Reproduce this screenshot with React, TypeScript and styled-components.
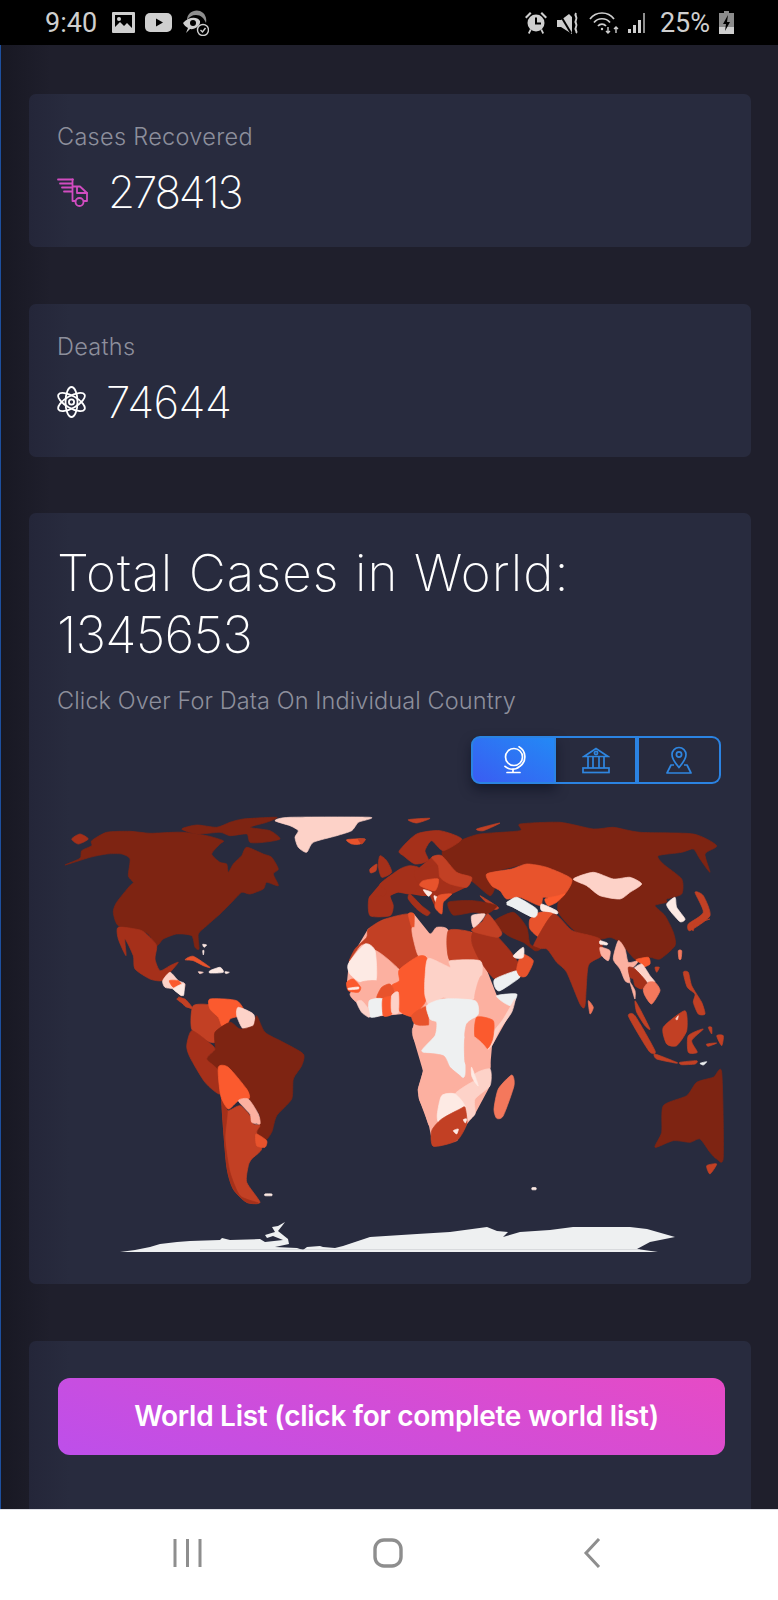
import styled, { createGlobalStyle } from 'styled-components'

const GlobalStyle = createGlobalStyle`
  html, body {
    margin: 0;
    padding: 0;
    background: #1f1f2c;
    font-family: Inter, 'Open Sans', sans-serif;
  }
`

const Screen = styled.div`
  width: 778px;
  height: 1600px;
  display: flex;
  flex-direction: column;
  overflow: hidden;
`

const StatusBar = styled.div`
  height: 45px;
  flex: none;
  background: #000;
  color: #cfcfcf;
  display: flex;
  align-items: center;
  justify-content: space-between;
  padding: 0 44px 0 45px;
  font-family: Roboto, sans-serif;
  font-size: 27px;
`

const StatusGroup = styled.div<{ $gap: number }>`
  display: flex;
  align-items: center;
  gap: ${p => p.$gap}px;
`

const StatusText = styled.span<{ $side: 'left' | 'right' }>`
  margin: ${p => (p.$side === 'left' ? '0 5px 0 0' : '0 0 0 3px')};
`

const Main = styled.div`
  flex: 1;
  min-height: 0;
  overflow: hidden;
  border-left: 1px solid #1d4f9e;
  padding: 49px 27px 0 28px;
  display: flex;
  flex-direction: column;
  gap: 56.5px;
  background: linear-gradient(90deg, #181823 0, #1f1f2c 50px, #1f1f2c 100%);
`

const Card = styled.section`
  flex: none;
  border-radius: 7px;
  background: linear-gradient(90deg, #242639 0, #282b3e 40px, #282b3e 100%);
`

const StatBody = styled.div`
  height: 153px;
  box-sizing: border-box;
  padding: 28px 28px 0;
`

const StatLabel = styled.div`
  font-size: 23.5px;
  line-height: 30px;
  font-weight: 300;
  color: #8d8f9c;
  letter-spacing: 0.3px;
`

const StatRow = styled.div`
  display: flex;
  align-items: center;
  gap: 20px;
  margin-top: 15px;
  height: 50px;
`

const StatValue = styled.div<{ $tracking: number }>`
  font-size: 44px;
  font-weight: 200;
  color: #fff;
  letter-spacing: ${p => p.$tracking}px;
`

const MapHead = styled.div`
  padding: 29px 28px 0;
`

const Title = styled.h1`
  margin: 0;
  font-size: 51px;
  line-height: 62px;
  font-weight: 200;
  color: #fff;
  letter-spacing: 1.1px;
`

const TitleNumber = styled.span`
  letter-spacing: -0.7px;
`

const Subtitle = styled.p`
  margin: 18px 0 0;
  font-size: 23.5px;
  line-height: 33px;
  font-weight: 300;
  color: #8d8f9c;
  letter-spacing: 0.1px;
`

const Toggle = styled.div`
  display: flex;
  justify-content: flex-end;
  margin: 19px 30px 0 0;
`

const ToggleButton = styled.div<{ $active?: boolean; $w: number; $pos: 'l' | 'm' | 'r' }>`
  width: ${p => p.$w}px;
  height: 48px;
  box-sizing: border-box;
  display: flex;
  align-items: center;
  justify-content: center;
  color: ${p => (p.$active ? '#fff' : '#2f86e0')};
  border: 2px solid #2b83e2;
  border-left-width: ${p => (p.$pos === 'l' ? 2 : 0)}px;
  border-right-width: ${p => (p.$pos === 'm' ? 4 : 2)}px;
  border-radius: ${p => (p.$pos === 'l' ? '9px 0 0 9px' : p.$pos === 'r' ? '0 9px 9px 0' : '0')};
  background: ${p => (p.$active ? 'linear-gradient(210deg, #2389f5 0%, #3a5cf2 100%)' : 'transparent')};
  box-shadow: ${p => (p.$active ? '0 6px 12px rgba(10, 12, 30, 0.55)' : 'none')};
`

const WorldSvg = styled.svg`
  display: block;
  margin-top: 6px;
  width: 722px;
  height: 494px;
`

const ListBody = styled.div`
  padding: 37px 26px 60px 29px;
`

const ListButton = styled.button`
  display: block;
  width: 100%;
  height: 77px;
  border: 0;
  border-radius: 12px;
  padding: 0 0 0 10px;
  color: #fff;
  font-family: Inter, sans-serif;
  font-size: 28px;
  font-weight: 600;
  letter-spacing: -0.27px;
  background: linear-gradient(20deg, #bd4fea 0%, #e64bc5 100%);
`

const NavBar = styled.div`
  height: 91px;
  flex: none;
  background: #fff;
  border-top: 1px solid #dfe0e6;
  box-sizing: border-box;
  display: grid;
  grid-template-columns: 173px 29px 171px 30px 180px 20px;
  align-items: center;
  padding-bottom: 4px;
  color: #8e8e8e;
  & > svg { display: block; }
`

const NavSpacer = styled.span``

const DARK = '#7e2412'
const DEEP = '#a5301a'
const MID = '#c24024'
const RED = '#e8532c'
const ORANGE = '#fb5a2e'
const CORAL = '#f4785c'
const SALMON = '#fcb0a0'
const PALE = '#fdd2c8'
const CREAM = '#fdeae4'
const GREY = '#eef0f1'

type Shape = [string, string]

// traced from 3x crops, a group per crop, see origin passed to toShapes
const americas: Shape[] = [
  [DARK, '45,198 90,178 95,155 125,140 125,125 170,100 240,97 300,103 370,100 400,100 470,110 520,125 510,135 485,165 510,190 530,195 535,220 550,195 575,170 590,145 640,165 665,175 685,210 670,225 685,260 650,250 640,270 600,285 575,280 545,310 510,345 470,380 445,405 447,450 435,445 425,410 380,405 340,420 320,440 295,405 270,395 205,380 190,340 200,310 240,260 250,250 235,230 240,180 215,165 170,165 120,175'],
  [DARK, '395,90 440,78 500,85 540,70 580,60 680,55 650,70 600,85 660,95 690,120 640,130 600,130 590,105 540,110 510,100 440,105'],
  [DEEP, '65,120 90,105 115,120 85,135'],
  [PALE, '675,65 720,55 960,55 925,70 905,95 860,110 790,130 770,160 745,145 735,115 745,95 720,80'],
  [RED, '890,122 945,120 930,135 905,135'],
  [DEEP, '205,385 270,393 295,410 320,440 315,480 330,515 360,500 385,490 360,520 335,545 300,540 255,510 250,470 225,420 228,470 205,420'],
  [PALE, '338,545 360,520 385,545 405,555 395,590 370,570 345,565'],
  [ORANGE, '358,545 385,545 395,560 370,565'],
  [CREAM, '370,570 400,555 400,590'],
  [MID, '385,595 400,600 420,625 405,622'],
  [RED, '405,482 430,472 480,505 460,500 430,485'],
  [CREAM, '480,515 510,505 520,520 480,522'],
  [PALE, '445,518 460,520 450,524'],
  [CREAM, '525,518 538,520 528,524'],
  [CREAM, '458,436 470,438 462,445'],
  [CREAM, '458,455 462,455 460,468'],
]

const europe: Shape[] = [
  [DEEP, '118,125 170,75 240,65 305,90 250,125 215,95 195,125 205,155 165,165 130,140'],
  [MID, '-5,90 15,92 5,105'],
  [MID, '145,32 210,28 170,42'],
  [MID, '350,60 420,42 370,65'],
  [DEEP, '60,140 80,155 95,190 65,205 55,170'],
  [MID, '30,180 50,165 48,185 32,192'],
  [DEEP, '60,225 120,180 150,170 180,180 170,240 150,255 115,250 90,260 100,290 90,320 30,320 28,265 70,262 80,245'],
  [DEEP, '150,255 185,290 210,310 200,320 170,300 145,270'],
  [DEEP, '165,185 230,170 240,205 175,220'],
  [DEEP, '225,225 275,225 270,250 235,255 225,240'],
  [RED, '190,215 235,210 225,245 180,230'],
  [MID, '215,145 245,140 290,190 335,205 320,235 270,225 240,205 235,170'],
  [CREAM, '190,242 215,250 205,262'],
  [CREAM, '222,260 240,270 228,280'],
  [RED, '235,260 275,255 250,280 245,315 225,295'],
]

const asia: Shape[] = [
  [DARK, '190,150 240,125 300,105 420,95 420,75 540,70 640,90 700,85 780,100 940,105 1010,140 975,165 990,220 960,180 940,150 905,160 835,170 850,195 905,240 905,285 860,300 860,310 825,320 855,350 880,400 885,440 840,480 810,475 770,485 720,430 690,415 660,420 590,400 535,340 540,290 575,240 500,205 440,195 395,205 325,225 345,260 330,290 280,250 230,220 190,180'],
  [RED, '320,225 395,210 440,195 500,205 575,240 555,285 525,300 490,295 480,320 420,295 380,300 360,275 335,260'],
  [ORANGE, '495,300 535,290 555,285 530,310 505,320'],
  [GREY, '380,315 410,295 470,330 465,358 400,325'],
  [CREAM, '485,315 530,335 530,345 485,335'],
  [PALE, '580,240 640,220 700,240 750,235 785,255 750,280 720,300 660,290 620,260'],
  [RED, '450,360 480,340 520,345 515,385 480,415 450,390'],
  [DEEP, '470,420 520,345 570,390 590,400 660,420 665,470 625,500 615,620 600,615 560,520 530,490 500,450 460,450'],
  [CREAM, '860,315 885,295 890,325 915,360 900,368 870,335'],
  [MID, '945,280 970,290 990,350 930,395 925,375 970,340'],
  [CORAL, '625,605 640,625 630,645'],
  [MID, '300,290 355,325 340,330'],
]

const africaNorth: Shape[] = [
  [DARK, '325,10 400,5 470,20 440,45 400,40 340,48'],
  [DARK, '460,70 520,40 560,85 570,135 600,150 585,155 550,130 505,110'],
  [GREY, '500,10 535,0 590,40 580,55 520,25'],
  [MID, '28,185 45,150 80,115 85,90 130,62 205,45 218,80 220,115 235,170 178,210 110,155 80,135 60,140'],
  [RED, '205,45 222,45 222,85 218,95'],
  [SALMON, '218,85 270,105 290,85 325,95 330,205 265,175 235,170 220,120'],
  [MID, '325,95 395,100 395,130 420,185 330,185'],
  [DEEP, '400,95 430,70 470,110 510,155 545,210 530,235 465,240 420,185 395,130'],
  [MID, '395,95 425,70 445,45 485,100 470,115'],
  [PALE, '395,50 435,45 420,70 400,85'],
  [GREY, '465,240 530,215 540,235 480,275 465,265'],
  [RED, '545,165 580,185 560,230 540,232 530,210'],
  [CREAM, '520,170 550,145 550,175 530,178'],
  [SALMON, '105,155 178,212 178,245 150,258 125,265 108,245'],
  [CREAM, '25,195 75,135 105,155 108,245 62,250 30,225'],
  [ORANGE, '178,212 235,172 262,182 258,300 240,330 225,355 190,345 175,330 175,290 155,260 178,245'],
  [SALMON, '30,285 62,250 108,245 125,265 112,298 90,302 70,305 50,310'],
  [ORANGE, '20,250 40,240 62,265 55,280 25,275'],
  [CREAM, '25,268 55,264 55,270 28,272'],
  [RED, '110,295 125,265 150,255 165,285 125,300'],
  [GREY, '88,305 128,300 128,345 100,355 88,350'],
  [PALE, '50,310 65,305 85,330 88,355 65,340'],
  [ORANGE, '128,300 155,295 155,345 130,350'],
  [PALE, '155,290 175,280 175,340 155,340'],
  [RED, '240,330 260,325 265,380 225,375 215,350'],
  [PALE, '255,235 265,178 330,205 330,185 420,185 425,230 405,285 400,300 345,310 310,295 270,320 255,290'],
  [SALMON, '425,230 470,290 520,300 500,340 460,365 415,355 405,330 405,285'],
  [GREY, '470,290 530,285 515,320 490,310'],
]

const southHalf: Shape[] = [
  [MID, '130,20 190,20 210,60 235,95 200,95 195,130 170,125 125,90'],
  [MID, '80,0 105,0 130,30 115,25'],
  [ORANGE, '180,0 260,5 285,45 240,60 230,95 215,80 205,55 180,30'],
  [PALE, '265,25 310,45 315,80 280,90 260,50'],
  [DARK, '195,100 240,70 270,90 310,80 320,50 345,100 400,130 460,165 455,200 430,240 425,300 380,350 365,400 340,430 320,400 330,350 300,305 290,270 235,205 200,215 170,180 195,150'],
  [DEEP, '125,95 170,125 195,150 170,180 205,215 210,285 165,250 120,175 110,140'],
  [MID, '215,300 232,335 270,320 300,350 310,375 330,380 320,400 335,450 305,480 295,500 290,550 330,610 290,610 250,570 230,500'],
  [DEEP, '215,300 232,335 225,420 240,520 270,590 325,612 290,610 250,570 230,500'],
  [ORANGE, '205,205 235,205 290,270 298,298 265,305 235,330 212,290'],
  [SALMON, '265,305 295,300 325,345 330,375 305,370 300,345'],
  [RED, '318,405 350,425 345,445 320,440'],
  [CREAM, '345,585 365,585 365,590 345,590'],
  [CREAM, '1146,566 1158,566 1158,572 1146,572'],
  // central and southern Africa
  [SALMON, '790,85 835,80 855,75 850,110 815,155 790,115'],
  [GREY, '830,20 880,0 975,5 985,45 955,70 950,100 945,140 945,225 935,235 900,205 880,170 845,165 815,155 855,110 860,70 840,60'],
  [SALMON, '950,75 975,60 975,115 945,115'],
  [PALE, '1030,100 1060,60 1095,0 1085,40 1050,90 1025,140 1012,150'],
  [ORANGE, '980,55 1030,65 1028,120 1010,150 975,115'],
  [SALMON, '945,115 975,115 1010,150 1020,210 975,225 960,205 945,190'],
  [SALMON, '815,165 880,170 900,205 935,235 935,250 915,260 880,285 815,290 805,270 820,215'],
  [PALE, '975,225 1020,210 1020,260 975,300 975,345 950,365 945,320 985,265'],
  [PALE, '915,285 975,245 985,265 975,290 945,320'],
  [CREAM, '965,205 985,260 975,250 965,230'],
  [SALMON, '805,270 815,290 880,285 870,330 862,365 860,390 838,380 825,340 808,300'],
  [CREAM, '875,290 915,285 945,325 890,360 865,368 862,345'],
  [MID, '845,395 875,360 930,330 945,325 950,375 920,425 850,442'],
  [CREAM, '910,395 925,390 920,405'],
  [CREAM, '940,362 950,360 946,372'],
  [CORAL, '1085,228 1092,260 1060,350 1040,358 1032,330 1045,270'],
]

const seAsia: Shape[] = [
  [CREAM, '0,65 22,72 20,78 0,75'],
  [SALMON, '0,85 30,95 25,125 5,110'],
  [SALMON, '40,120 55,65 75,90 85,130 115,125 100,145 85,150 90,190 75,185 60,150'],
  [ORANGE, '108,122 145,115 150,135 130,145 125,135'],
  [PALE, '100,150 125,135 150,170 165,190 140,190 115,160'],
  [DEEP, '85,145 105,150 140,190 125,210 105,200 100,180 90,175'],
  [SALMON, '90,190 105,215 105,240 100,225'],
  [CORAL, '130,210 145,190 165,190 180,215 155,255 135,230'],
  [MID, '165,145 178,145 170,160'],
  [CORAL, '235,95 245,95 243,120 237,120'],
  [MID, '270,20 330,0 285,15 280,35'],
  [MID, '250,160 265,160 275,200 305,250 315,285 295,285 280,250 285,225 262,205'],
  [MID, '105,245 120,270 150,330 135,320 110,280'],
  [MID, '85,290 105,290 165,395 150,400 115,345'],
  [MID, '165,405 230,430 225,432 170,420'],
  [MID, '190,325 255,275 260,335 230,380 200,375'],
  [PALE, '227,300 235,290 232,302'],
  [MID, '265,350 310,330 275,365 292,400 265,400'],
  [MID, '350,350 370,350 365,380'],
  [MID, '320,375 350,372 325,382'],
  [MID, '240,430 290,425 285,435 245,437'],
  [MID, '325,325 335,325 335,345'],
  [GREY, '300,433 320,428 310,438'],
]

const oceania: Shape[] = [
  [DARK, '545,220 550,475 530,480 510,460 480,420 450,430 400,425 345,445 365,400 370,320 440,290 470,250 520,235'],
  [MID, '500,500 530,495 510,525'],
]

// solid land under the countries so no sea shows between traced borders, page px
const africaLand =
  '349,962 368,930 383,921 414,915 430,935 472,933 497,997 517,995 510,1015 492,1047 490,1070 490,1087 475,1115 467,1125 457,1142 433,1147 429,1127 419,1100 418,1090 423,1072 413,1038 413,1028 415,1018 403,1015 383,1017 369,1018 357,1003 347,983'
const europeLand =
  '369,898 380,885 400,870 415,872 432,858 443,857 472,878 467,888 452,895 443,903 442,915 435,908 430,897 422,897 410,895 398,893 390,897 393,907 390,917 370,917'

// ice shelf is spiky, left unsmoothed and in page px
const antarctica =
  '120,1253 135,1251 150,1248 160,1245 177,1243 190,1242 220,1241 222,1239 230,1241 260,1240 265,1243 283,1241 273,1237 267,1239 265,1236 275,1233 272,1228 278,1227 285,1223 282,1227 278,1232 288,1240 289,1245 275,1248 297,1249 303,1251 307,1248 320,1247 323,1248 335,1249 343,1247 370,1238 417,1235 450,1233 487,1228 497,1232 508,1233 503,1238 520,1233 550,1231 573,1228 630,1228 647,1230 675,1238 650,1243 637,1250 658,1253'

// closed Catmull-Rom through the crop points, so coasts do not look cut with a ruler
const smoothPath = (pts: string, ox: number, oy: number) => {
  const p = pts.split(' ').map(s => {
    const [x, y] = s.split(',').map(Number)
    return [ox + x / 3, oy + y / 3]
  })
  const n = p.length
  const f = (v: number) => v.toFixed(1)
  let d = `M${f(p[0][0])} ${f(p[0][1])}`
  for (let i = 0; i < n; i++) {
    const p0 = p[(i - 1 + n) % n]
    const p1 = p[i]
    const p2 = p[(i + 1) % n]
    const p3 = p[(i + 2) % n]
    const c1x = p1[0] + (p2[0] - p0[0]) / 9
    const c1y = p1[1] + (p2[1] - p0[1]) / 9
    const c2x = p2[0] - (p3[0] - p1[0]) / 9
    const c2y = p2[1] - (p3[1] - p1[1]) / 9
    d += `C${f(c1x)} ${f(c1y)} ${f(c2x)} ${f(c2y)} ${f(p2[0])} ${f(p2[1])}`
  }
  return d + 'Z'
}

const toShapes = (shapes: Shape[], ox: number, oy: number) =>
  shapes.map(([fill, pts], i) => (
    <path key={`${ox}-${oy}-${i}`} fill={fill} stroke={fill} strokeWidth="0.7" d={smoothPath(pts, ox, oy)} />
  ))

function WorldMap() {
  return (
    <WorldSvg viewBox="29 791 722 494">
      {toShapes(americas, 50, 800)}
      <polygon fill={DEEP} points={europeLand} />
      <polygon fill={SALMON} points={africaLand} />
      {toShapes(asia, 380, 800)}
      {toShapes(europe, 360, 810)}
      {toShapes(africaNorth, 340, 900)}
      {toShapes(southHalf, 150, 1000)}
      {toShapes(seAsia, 600, 920)}
      {toShapes(oceania, 540, 1000)}
      <polygon fill={GREY} points={antarctica} />
      <path d="M200 1250.5H640" stroke="#c9cbd0" strokeWidth="0.6" />
    </WorldSvg>
  )
}

function TruckIcon() {
  return (
    <svg width="31" height="29" viewBox="0 0 31 29" fill="none" stroke="#d14cc0" strokeWidth="1.8" strokeLinejoin="round" strokeLinecap="round">
      <path d="M1 1.500h15M3 5.500h12M5 9.500h10M7 13.500h8" />
      <path d="M15.500 1.500V23h3M27 23h3v-8l-7-6.500h-7.500" />
      <path d="M20 9v6h10" />
      <circle cx="22.500" cy="24" r="4" />
    </svg>
  )
}

function AtomIcon() {
  return (
    <svg width="29" height="32" viewBox="0 0 29 32" fill="none" stroke="#fff" strokeWidth="1.8">
      <ellipse cx="14.500" cy="16" rx="6" ry="15" />
      <ellipse cx="14.500" cy="16" rx="6" ry="15" transform="rotate(60 14.500 16)" />
      <ellipse cx="14.500" cy="16" rx="6" ry="15" transform="rotate(120 14.500 16)" />
      <circle cx="14.500" cy="16" r="2.600" />
    </svg>
  )
}

function GlobeIcon() {
  return (
    <svg width="24" height="28" viewBox="0 0 24 28" fill="none" stroke="#fff" strokeWidth="1.7" strokeLinecap="round">
      <circle cx="12" cy="11" r="8.500" />
      <path d="M17 0.800a11.500 11.500 0 0 1 1 19.400 A11 11 0 0 1 3 20.400" />
      <path d="M11 23v3M5 26.500h13" />
    </svg>
  )
}

function BankIcon() {
  return (
    <svg width="28" height="27" viewBox="0 0 28 27" fill="none" stroke="#2f86e0" strokeWidth="1.7">
      <path d="M2 9.500L14 1.500l12 8z" />
      <circle cx="14" cy="6" r="1.600" />
      <path d="M6 10v11M11 10v11M17 10v11M22 10v11" />
      <rect x="1" y="21" width="26" height="4.500" />
    </svg>
  )
}

function PinIcon() {
  return (
    <svg width="26" height="28" viewBox="0 0 26 28" fill="none" stroke="#2f86e0" strokeWidth="1.7" strokeLinejoin="round">
      <path d="M13 21.500C9 16.500 6 13.500 6 8.500a7 7 0 0 1 14 0c0 5-3 8-7 13z" />
      <circle cx="13" cy="8.500" r="2.600" />
      <path d="M8 19H5L1 27h24l-4-8h-3" />
    </svg>
  )
}

function StatusLeftIcons() {
  return (
    <>
      <svg width="23" height="21" viewBox="0 0 23 21" fill="#cfcfcf">
        <path fillRule="evenodd" d="M1 0h21a1 1 0 0 1 1 1v19a1 1 0 0 1-1 1H1a1 1 0 0 1-1-1V1a1 1 0 0 1 1-1zm2 3v12l5-5 4 4 3-3 5 5V3z" />
        <circle cx="7" cy="7" r="2" />
      </svg>
      <svg width="27" height="19" viewBox="0 0 27 19">
        <rect width="27" height="19" rx="5" fill="#cfcfcf" />
        <path d="M11 5.500l7 4-7 4z" fill="#000" />
      </svg>
      <svg width="27" height="27" viewBox="0 0 27 27">
        <path d="M5 11C5 4 12 0 18 2c5 2 7 7 6 12-2-5-5-8-10-8-4 0-7 2-9 5z" fill="#8e8e8e" />
        <path d="M1 14c5-6 14-7 17-2 1 5-6 9-10 8l-4 4 2-5c-2-1-4-3-5-5z" fill="#cfcfcf" />
        <circle cx="11" cy="14" r="3" fill="#000" />
        <circle cx="21" cy="21" r="5.500" fill="#000" stroke="#cfcfcf" strokeWidth="1.400" />
        <path d="M18.500 21l2 2 3-4" stroke="#cfcfcf" fill="none" strokeWidth="1.400" />
      </svg>
    </>
  )
}

function StatusRightIcons() {
  return (
    <>
      <svg width="24" height="23" viewBox="0 0 24 23" fill="#cfcfcf">
        <circle cx="12" cy="12" r="8.500" />
        <path d="M1 6l5-5 1.500 1.500-5 5zM23 6l-5-5-1.500 1.500 5 5zM4 22l2-4 1.500 1-2 4zM20 22l-2-4-1.500 1 2 4z" />
        <path d="M12 6.500v6h5" stroke="#000" strokeWidth="2" fill="none" />
      </svg>
      <svg width="23" height="22" viewBox="0 0 23 22" fill="#cfcfcf">
        <path d="M0 8h4l8-6 3 3v17L4 15H0z" />
        <path d="M2 1l12 20" stroke="#000" strokeWidth="2" />
        <path d="M19 1c-2 3 2 4 0 7s2 4 0 7 2 4 0 6" stroke="#cfcfcf" strokeWidth="2" fill="none" />
      </svg>
      <svg width="30" height="22" viewBox="0 0 30 22" fill="none" stroke="#cfcfcf" strokeWidth="1.700">
        <path d="M1 7c6-8 18-8 24 0M5 10.500c4-5 12-5 16 0M9 14c2-2.500 6-2.500 8 0" />
        <circle cx="13" cy="17" r="1.200" fill="#cfcfcf" stroke="none" />
        <path d="M19 15v6M17 19l2 2 2-2M27 21v-6M25 17l2-2 2 2" strokeWidth="1.400" />
      </svg>
      <svg width="20" height="22" viewBox="0 0 20 22" fill="#cfcfcf">
        <rect x="0" y="17" width="3" height="4" />
        <rect x="5" y="13" width="3" height="8" />
        <rect x="10" y="8" width="3" height="13" />
        <rect x="15" y="1" width="2" height="20" fill="#8e8e8e" />
      </svg>
    </>
  )
}

function BatteryIcon() {
  return (
    <svg width="15" height="23" viewBox="0 0 15 23">
      <path d="M5 0h5v2h5v21H0V2h5z" fill="#8c8c8c" />
      <path d="M0 16h15v7H0z" fill="#cfcfcf" />
      <path d="M9 4L4 13h3l-1 7 5-9H8z" fill="#000" />
    </svg>
  )
}

export default function App() {
  return (
    <>
      <GlobalStyle />
      <Screen>
        <StatusBar>
          <StatusGroup $gap={10}>
            <StatusText $side="left">9:40</StatusText>
            <StatusLeftIcons />
          </StatusGroup>
          <StatusGroup $gap={9}>
            <StatusRightIcons />
            <StatusText $side="right">25%</StatusText>
            <BatteryIcon />
          </StatusGroup>
        </StatusBar>
        <Main>
          <Card>
            <StatBody>
              <StatLabel>Cases Recovered</StatLabel>
              <StatRow>
                <TruckIcon />
                <StatValue $tracking={-2.2}>278413</StatValue>
              </StatRow>
            </StatBody>
          </Card>
          <Card>
            <StatBody>
              <StatLabel>Deaths</StatLabel>
              <StatRow>
                <AtomIcon />
                <StatValue $tracking={-0.6}>74644</StatValue>
              </StatRow>
            </StatBody>
          </Card>
          <Card>
            <MapHead>
              <Title>
                Total Cases in World:
                <br />
                <TitleNumber>1345653</TitleNumber>
              </Title>
              <Subtitle>Click Over For Data On Individual Country</Subtitle>
            </MapHead>
            <Toggle>
              <ToggleButton $active $w={85} $pos="l">
                <GlobeIcon />
              </ToggleButton>
              <ToggleButton $w={83} $pos="m">
                <BankIcon />
              </ToggleButton>
              <ToggleButton $w={82} $pos="r">
                <PinIcon />
              </ToggleButton>
            </Toggle>
            <WorldMap />
          </Card>
          <Card>
            <ListBody>
              <ListButton>World List (click for complete world list)</ListButton>
            </ListBody>
          </Card>
        </Main>
        <NavBar>
          <NavSpacer />
          <svg width="29" height="30" viewBox="0 0 29 30" stroke="#8e8e8e" strokeWidth="3">
            <path d="M2 1v28M14.500 1v28M27 1v28" />
          </svg>
          <NavSpacer />
          <svg width="30" height="30" viewBox="0 0 30 30" fill="none" stroke="#8e8e8e" strokeWidth="3.400">
            <rect x="2" y="2" width="26" height="26" rx="9" />
          </svg>
          <NavSpacer />
          <svg width="18" height="30" viewBox="0 0 18 30" fill="none" stroke="#8e8e8e" strokeWidth="3">
            <path d="M16 1L3 15l13 14" />
          </svg>
        </NavBar>
      </Screen>
    </>
  )
}
